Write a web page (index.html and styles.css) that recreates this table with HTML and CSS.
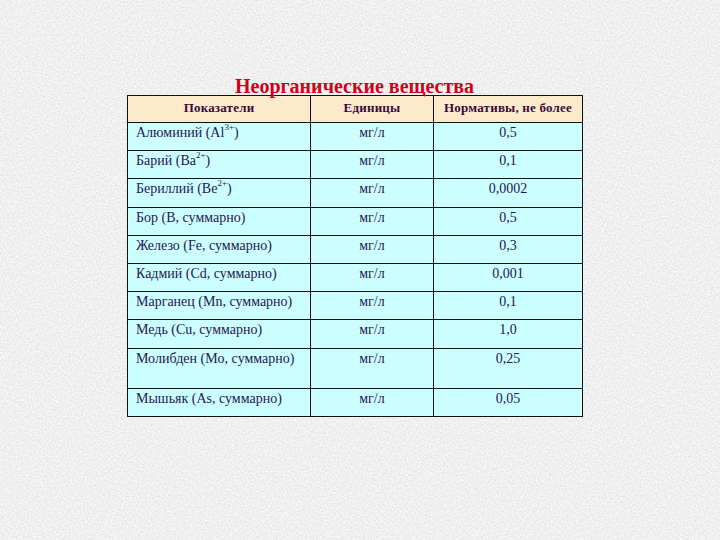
FILE: index.html
```html
<!DOCTYPE html>
<html lang="ru">
<head>
<meta charset="utf-8">
<title>Неорганические вещества</title>
<link rel="stylesheet" href="styles.css">
</head>
<body>
<svg class="texture" width="720" height="540" aria-hidden="true">
  <filter id="grain" x="0" y="0" width="100%" height="100%">
    <feTurbulence type="fractalNoise" baseFrequency="0.55" numOctaves="2" seed="7"/>
    <feColorMatrix type="matrix" values="0.32 0 0 0 0.71  0.32 0 0 0 0.71  0.32 0 0 0 0.71  0 0 0 0 1"/>
  </filter>
  <rect width="720" height="540" filter="url(#grain)"/>
</svg>
<main class="slide">
  <h1 class="title">Неорганические вещества</h1>
  <table class="norms">
    <colgroup>
      <col class="c1"><col class="c2"><col class="c3">
    </colgroup>
    <thead>
      <tr><th>Показатели</th><th>Единицы</th><th>Нормативы, не более</th></tr>
    </thead>
    <tbody>
      <tr><td>Алюминий (Al<sup>3+</sup>)</td><td>мг/л</td><td>0,5</td></tr>
      <tr><td>Барий (Ba<sup>2+</sup>)</td><td>мг/л</td><td>0,1</td></tr>
      <tr><td>Бериллий (Be<sup>2+</sup>)</td><td>мг/л</td><td>0,0002</td></tr>
      <tr><td>Бор (B, суммарно)</td><td>мг/л</td><td>0,5</td></tr>
      <tr><td>Железо (Fe, суммарно)</td><td>мг/л</td><td>0,3</td></tr>
      <tr><td>Кадмий (Cd, суммарно)</td><td>мг/л</td><td>0,001</td></tr>
      <tr><td>Марганец (Mn, суммарно)</td><td>мг/л</td><td>0,1</td></tr>
      <tr><td>Медь (Cu, суммарно)</td><td>мг/л</td><td>1,0</td></tr>
      <tr class="tall"><td>Молибден (Mo, суммарно)</td><td>мг/л</td><td>0,25</td></tr>
      <tr><td>Мышьяк (As, суммарно)</td><td>мг/л</td><td>0,05</td></tr>
    </tbody>
  </table>
</main>
</body>
</html>
```
FILE: styles.css
```css
html, body {
  margin: 0;
  padding: 0;
  width: 720px;
  height: 540px;
  overflow: hidden;
  background: #e4e4e4;
}
.texture {
  position: absolute;
  left: 0;
  top: 0;
  z-index: 0;
  display: block;
}
.slide {
  position: relative;
  z-index: 1;
  padding: 77px 0 0 127px;
  font-family: "Liberation Serif", "Times New Roman", serif;
}
.title {
  width: 455px;
  margin: 0;
  text-align: center;
  font-family: "Liberation Serif", "Times New Roman", serif;
  font-size: 20px;
  line-height: 18px;
  font-weight: bold;
  color: #d0001a;
}
.norms {
  border-collapse: collapse;
  width: 455px;
  table-layout: fixed;
  font-family: "Liberation Serif", "Times New Roman", serif;
  font-size: 14px;
  color: #261652;
  background: #ccffff;
}
.c1 { width: 183px; }
.c2 { width: 123px; }
.c3 { width: 149px; }
.norms th,
.norms td {
  border: 1px solid #111;
  padding: 2px 8px 0;
  vertical-align: top;
  line-height: 16px;
  text-align: center;
  font-family: "Liberation Serif", "Times New Roman", serif;
}
.norms th {
  height: 22px;
  padding: 4px 2px 0;
  background: #fdeacd;
  color: #3a0a3c;
  font-size: 13px;
  letter-spacing: 0.2px;
  font-weight: bold;
  white-space: nowrap;
}
.norms td {
  height: 25.2px;
}
.norms td:first-child {
  text-align: left;
}
.norms tr.tall td {
  height: 37px;
}
.norms sup {
  font-size: 9px;
  line-height: 0;
  vertical-align: 7px;
}
```
